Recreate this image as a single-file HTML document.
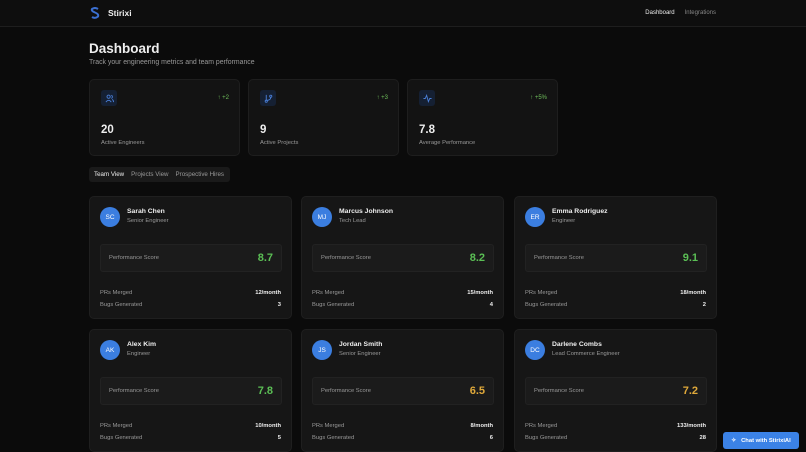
<!DOCTYPE html>
<html><head><meta charset="utf-8"><style>
*{box-sizing:border-box;margin:0;padding:0}
body{width:806px;height:452px;overflow:hidden;background:#0b0b0b;font-family:"Liberation Sans",sans-serif;color:#eee;position:relative}
.hdr{height:27px;border-bottom:1px solid #1e1e1e;background:#0e0e0e;position:relative}
.logo{position:absolute;left:90px;top:7px;display:flex;align-items:center;gap:8px;font-size:8.5px;font-weight:bold}
.nav{position:absolute;right:90px;top:10px;font-size:6px;color:#888}
.nav b{color:#eee;font-weight:normal;margin-right:10px}
h1{position:absolute;left:89px;top:41px;font-size:13.5px;font-weight:bold}
.sub{position:absolute;left:89px;top:59px;font-size:6.9px;color:#999}
.stat{position:absolute;top:79px;width:151px;height:77px;background:#131313;border:1px solid #1e1e1e;border-radius:5px}
.ic{position:absolute;left:11px;top:10px;width:16px;height:16px;border-radius:3px;background:#152033;display:flex;align-items:center;justify-content:center}
.delta{position:absolute;right:10px;top:15px;font-size:6px;color:#6fbf5b}
.num{position:absolute;left:11px;top:44px;font-size:11.5px;font-weight:bold}
.lbl{position:absolute;left:11px;top:60px;font-size:5.8px;color:#999}
.tabs{position:absolute;left:89px;top:167px;width:141px;height:15px;background:#1a1a1a;border-radius:3px;font-size:6.2px;color:#999;display:flex;align-items:center;padding-left:5px;gap:7px}
.tabs b{color:#eee;font-weight:normal}
.card{position:absolute;width:203px;height:123px;background:#161616;border:1px solid #1f1f1f;border-radius:5px}
.av{position:absolute;left:10px;top:10px;width:20px;height:20px;border-radius:50%;background:#3b7ee0;font-size:6.5px;display:flex;align-items:center;justify-content:center;color:#fff}
.nm{position:absolute;left:37px;top:11px;font-size:6.8px;font-weight:bold}
.rl{position:absolute;left:37px;top:21px;font-size:5.8px;color:#999}
.ps{position:absolute;left:10px;top:47px;width:182px;height:28px;background:#1b1b1b;border:1px solid #222;border-radius:3px}
.ps span{position:absolute;left:8px;top:10px;font-size:5.8px;color:#999}
.ps i{position:absolute;right:8px;top:7px;font-size:11px;font-weight:bold;font-style:normal}
.row{position:absolute;left:10px;right:10px;font-size:5.8px;color:#999;display:flex;justify-content:space-between}
.row b{color:#eee}
.g{color:#5bbf55}.y{color:#e0a93a}
.chat{position:absolute;left:723px;top:432px;width:76px;height:17px;background:#3b82e6;border-radius:3px;font-size:5.8px;color:#fff;display:flex;align-items:center;justify-content:center;gap:5px;font-weight:bold}
</style></head><body>
<div class="hdr"><div class="logo"><svg width="10" height="12" viewBox="0 0 10 12"><path d="M8 2Q5 0 2 2Q1 4 5 5.5Q9 7 8 9.5Q5 12 2 10" stroke="#3b6fd0" stroke-width="2" fill="none"/></svg>Stirixi</div>
<div class="nav"><b>Dashboard</b>Integrations</div></div>
<h1>Dashboard</h1><div class="sub">Track your engineering metrics and team performance</div>
<div class="stat" style="left:89px"><div class="ic"><svg width="9" height="9" viewBox="0 0 10 10" fill="none" stroke="#4a7fd8" stroke-width="1"><circle cx="4" cy="3" r="1.8"/><path d="M1 9q3-4 6 0M7 1.5a1.8 1.8 0 010 3.4M8 6q1.5 1 1.5 3"/></svg></div><div class="delta">↑ +2</div><div class="num">20</div><div class="lbl">Active Engineers</div></div>
<div class="stat" style="left:248px"><div class="ic"><svg width="9" height="9" viewBox="0 0 10 10" fill="none" stroke="#4a7fd8" stroke-width="1"><circle cx="2.5" cy="8" r="1.2"/><circle cx="7.5" cy="2.5" r="1.2"/><path d="M2.5 1v5.8M7.5 3.7q0 3-5 3.5"/></svg></div><div class="delta">↑ +3</div><div class="num">9</div><div class="lbl">Active Projects</div></div>
<div class="stat" style="left:407px"><div class="ic"><svg width="9" height="9" viewBox="0 0 10 10" fill="none" stroke="#4a7fd8" stroke-width="1"><path d="M0.5 5h2l1.5-3.5 2 7 1.5-3.5h2"/></svg></div><div class="delta">↑ +5%</div><div class="num">7.8</div><div class="lbl">Average Performance</div></div>
<div class="tabs"><b>Team View</b>Projects View<span>Prospective Hires</span></div>

<div class="card" style="left:89px;top:196px"><div class="av">SC</div><div class="nm">Sarah Chen</div><div class="rl">Senior Engineer</div><div class="ps"><span>Performance Score</span><i class="g">8.7</i></div><div class="row" style="top:93px">PRs Merged<b>12/month</b></div><div class="row" style="top:105px">Bugs Generated<b>3</b></div></div>
<div class="card" style="left:301px;top:196px"><div class="av">MJ</div><div class="nm">Marcus Johnson</div><div class="rl">Tech Lead</div><div class="ps"><span>Performance Score</span><i class="g">8.2</i></div><div class="row" style="top:93px">PRs Merged<b>15/month</b></div><div class="row" style="top:105px">Bugs Generated<b>4</b></div></div>
<div class="card" style="left:514px;top:196px"><div class="av">ER</div><div class="nm">Emma Rodriguez</div><div class="rl">Engineer</div><div class="ps"><span>Performance Score</span><i class="g">9.1</i></div><div class="row" style="top:93px">PRs Merged<b>18/month</b></div><div class="row" style="top:105px">Bugs Generated<b>2</b></div></div>
<div class="card" style="left:89px;top:329px"><div class="av">AK</div><div class="nm">Alex Kim</div><div class="rl">Engineer</div><div class="ps"><span>Performance Score</span><i class="g">7.8</i></div><div class="row" style="top:93px">PRs Merged<b>10/month</b></div><div class="row" style="top:105px">Bugs Generated<b>5</b></div></div>
<div class="card" style="left:301px;top:329px"><div class="av">JS</div><div class="nm">Jordan Smith</div><div class="rl">Senior Engineer</div><div class="ps"><span>Performance Score</span><i class="y">6.5</i></div><div class="row" style="top:93px">PRs Merged<b>8/month</b></div><div class="row" style="top:105px">Bugs Generated<b>6</b></div></div>
<div class="card" style="left:514px;top:329px"><div class="av">DC</div><div class="nm">Darlene Combs</div><div class="rl">Lead Commerce Engineer</div><div class="ps"><span>Performance Score</span><i class="y">7.2</i></div><div class="row" style="top:93px">PRs Merged<b>133/month</b></div><div class="row" style="top:105px">Bugs Generated<b>28</b></div></div>
<div class="chat"><span>✧</span>Chat with StirixiAI</div>
</body></html>
